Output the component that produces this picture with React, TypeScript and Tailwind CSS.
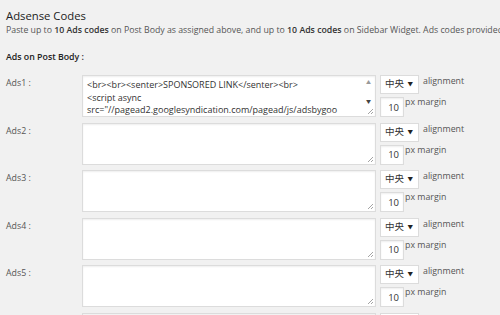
import React from "react";

const rows = [
  { label: "Ads1 :", code: ['<br><br><senter>SPONSORED LINK</senter><br>', "<script async", 'src="//pagead2.googlesyndication.com/pagead/js/adsbygoo'] },
  { label: "Ads2 :", code: [] },
  { label: "Ads3 :", code: [] },
  { label: "Ads4 :", code: [] },
  { label: "Ads5 :", code: [] },
  { label: "Ads6 :", code: [] },
];

function Grip() {
  return (
    <svg className="absolute right-[1px] bottom-[1px]" width="8" height="8" viewBox="0 0 8 8">
      <path d="M7 2 L2 7 M7 5 L5 7" stroke="#9a9a9a" strokeWidth="0.9" />
    </svg>
  );
}

function CodeBox({ code }: { code: string[] }) {
  const filled = code.length > 0;
  return (
    <div className="relative w-[294px] h-[42px] shrink-0 bg-white border border-[#dcdcdc] shadow-[inset_0_1px_2px_rgba(0,0,0,0.07)] overflow-hidden">
      {filled && (
        <div className="pl-[4px] pr-[14px] pt-[3px] text-[9px] leading-[12.5px] text-[#333] whitespace-nowrap overflow-hidden">
          {code.map((l, i) => (
            <div key={i}>{l}</div>
          ))}
        </div>
      )}
      {filled && (
        <div className="absolute right-[1px] top-0 w-[11px] h-[32px] flex flex-col items-center justify-between py-[4px] text-[5px] leading-[5px] text-[#999]">
          <span>▲</span>
          <span className="text-[#444]">▼</span>
        </div>
      )}
      <Grip />
    </div>
  );
}

export default function App() {
  return (
    <div className="w-[500px] h-[315px] overflow-hidden bg-[#f1f1f1] text-[#444] font-['Open_Sans','Noto_Sans_CJK_JP',sans-serif]">
      <div className="pl-[6px] pt-[7px]">
        <h3 className="text-[11.3px] leading-[17px] text-[#222]">Adsense Codes</h3>
        <p className="text-[8.75px] leading-[13px] text-[#555] whitespace-nowrap">
          Paste up to <b className="font-semibold text-[#333]">10 Ads codes</b> on Post Body as assigned above, and up to{" "}
          <b className="font-semibold text-[#333]">10 Ads codes</b> on Sidebar Widget. Ads codes provided
        </p>
        <h4 className="mt-[14px] text-[8.8px] leading-[13px] font-semibold text-[#222]">Ads on Post Body :</h4>

        <div className="mt-[11px] flex flex-col gap-[5.5px]">
          {rows.map((r) => (
            <div key={r.label} className="flex">
              <div className="w-[76px] shrink-0 pt-[2px] text-[8.8px] leading-[12px] text-[#555]">{r.label}</div>
              <CodeBox code={r.code} />
              <div className="ml-[4px] flex flex-col gap-[3px]">
                <div className="flex items-start">
                  <div className="w-[39px] h-[19px] bg-white border border-[#dcdcdc] flex items-center justify-between pl-[4px] pr-[5px] text-[9.5px] text-[#333]">
                    <span>中央</span>
                    <span className="text-[5.5px] text-[#222]">▼</span>
                  </div>
                  <span className="ml-[4px] pt-[1px] text-[8.8px] leading-[11px] text-[#555]">alignment</span>
                </div>
                <div className="flex items-start">
                  <div className="w-[24px] h-[20px] bg-white border border-[#dcdcdc] shadow-[inset_0_1px_2px_rgba(0,0,0,0.07)] flex items-center justify-end pr-[4px] pt-[2px] text-[9.5px] text-[#333]">
                    10
                  </div>
                  <span className="ml-[1px] text-[8.8px] leading-[11px] text-[#555]">px margin</span>
                </div>
              </div>
            </div>
          ))}
        </div>
      </div>
    </div>
  );
}
